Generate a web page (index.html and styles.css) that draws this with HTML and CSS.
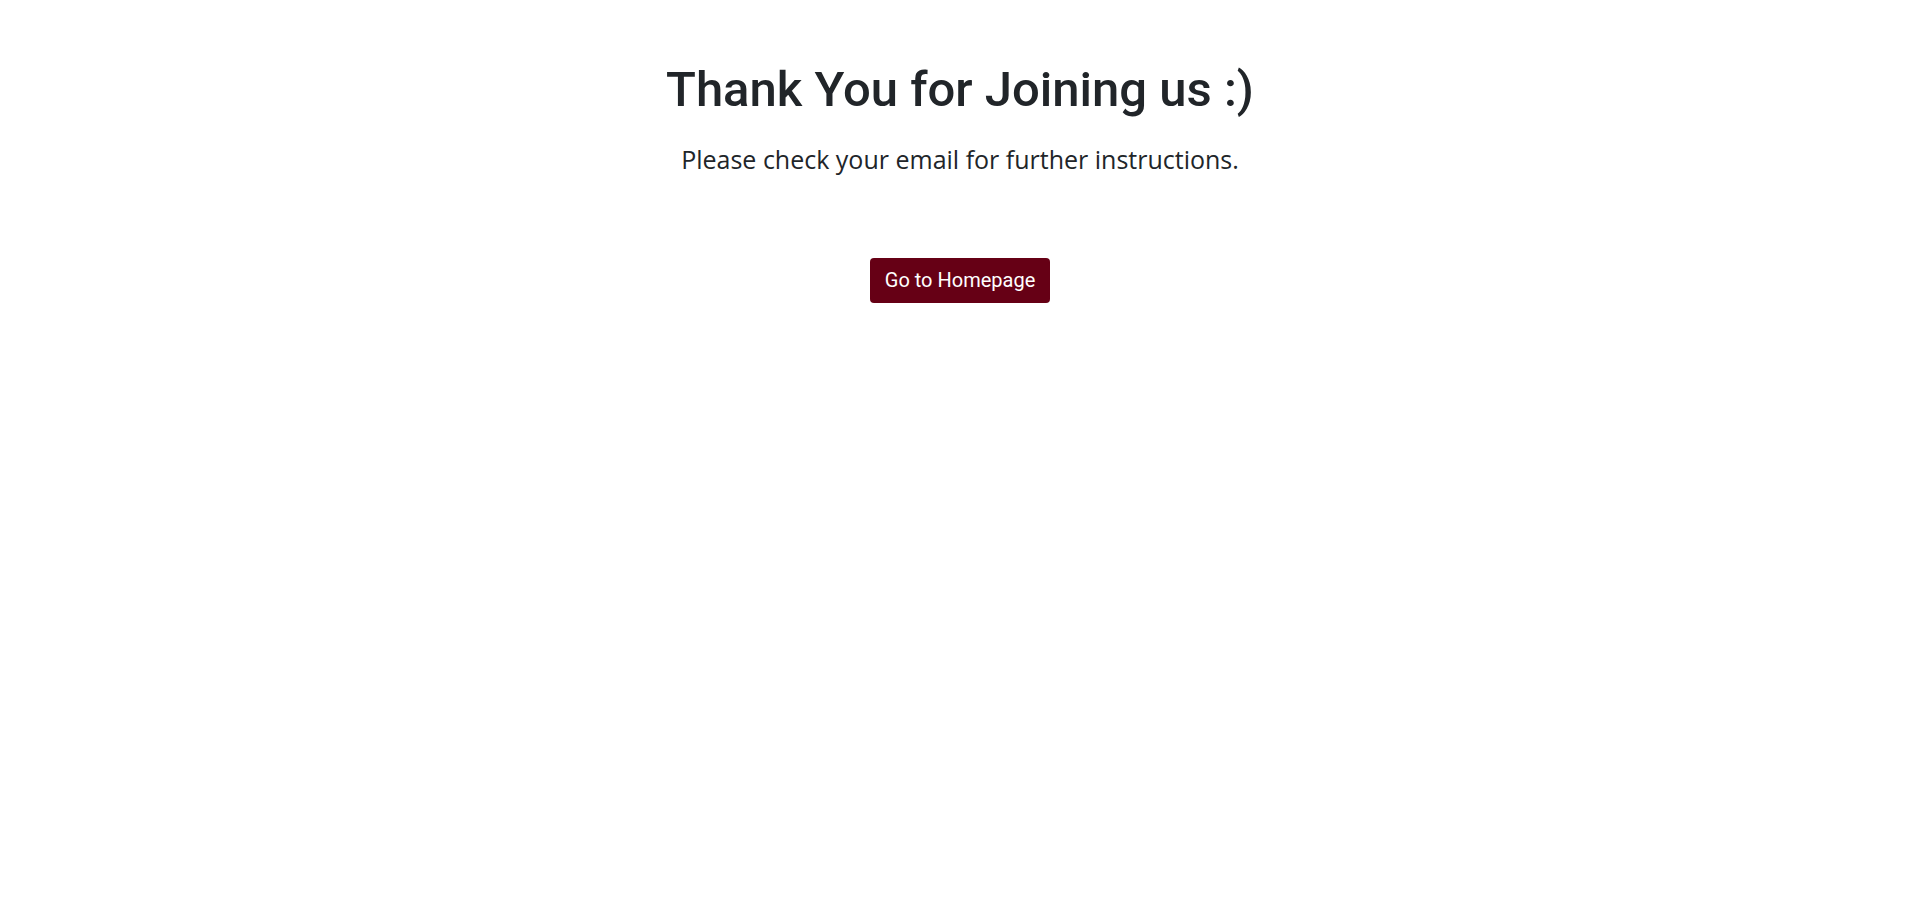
FILE: index.html
```html
<!DOCTYPE html>
<html lang="en">
<head>
<meta charset="utf-8">
<title>Thank You</title>
<link rel="stylesheet" href="styles.css">
</head>
<body>
<main class="thanks">
  <h1 class="thanks-title">Thank You for Joining us :)</h1>
  <p class="thanks-text">Please check your email for further instructions.</p>
  <a class="btn-home" href="#">Go to Homepage</a>
</main>
</body>
</html>
```

FILE: styles.css
```css
html, body {
  margin: 0;
  padding: 0;
  background: #fff;
}
body {
  font-family: Roboto, "Liberation Sans", sans-serif;
  color: #212529;
}
.thanks {
  display: flex;
  flex-direction: column;
  align-items: center;
  padding-top: 61px;
}
.thanks-title {
  margin: 0;
  font-family: Roboto, sans-serif;
  font-weight: 500;
  font-size: 49px;
  line-height: 1.2;
}
.thanks-text {
  margin: 21px 0 0;
  font-family: "Open Sans", sans-serif;
  font-size: 25px;
  line-height: 1.5;
}
.btn-home {
  margin-top: 80px;
  display: inline-block;
  background: #660015;
  color: #fff;
  text-decoration: none;
  font-family: Roboto, sans-serif;
  font-size: 20px;
  line-height: 25px;
  padding: 10px 15px;
  border-radius: 4px;
}
```
